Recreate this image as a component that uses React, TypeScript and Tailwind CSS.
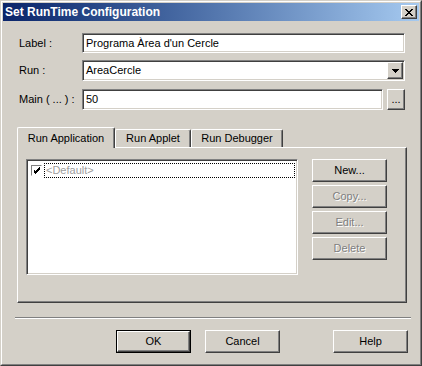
import React from "react";

const sunken =
  "border border-t-[#808080] border-l-[#808080] border-b-white border-r-white shadow-[inset_1px_1px_0_#404040,inset_-1px_-1px_0_#d4d0c8]";
const raised =
  "border border-t-white border-l-white border-b-[#404040] border-r-[#404040] shadow-[inset_-1px_-1px_0_#808080]";

function Button({
  label,
  disabled = false,
  isDefault = false,
  className = "",
}: {
  label: string;
  disabled?: boolean;
  isDefault?: boolean;
  className?: string;
}) {
  const inner = (
    <div
      className={`flex h-full w-full items-center justify-center bg-[#d4d0c8] ${raised} ${
        disabled ? "text-[#808080] [text-shadow:1px_1px_0_#fff]" : "text-black"
      }`}
    >
      {label}
    </div>
  );
  if (isDefault) {
    return <div className={`border border-black ${className}`}>{inner}</div>;
  }
  return <div className={className}>{inner}</div>;
}

function CheckMark() {
  return (
    <svg width="7" height="7" viewBox="0 0 7 7" shapeRendering="crispEdges">
      <path d="M0 2h1v3h1v1h1v-1h1v-1h1v-1h1v-1h1v-2h-1v1h-1v1h-1v1h-1v1h-1v-1h-1v-1z" fill="#000" />
      <path d="M0 3h1v3h1v1h1v-1h1v-1h1v-1h1v-1h1v-1h-1v1h-1v1h-1v1h-1v1h-1v-1h-1v-1z" fill="#000" />
    </svg>
  );
}

export default function App() {
  const tabs = [
    { id: "app", label: "Run Application", w: "w-[98px]" },
    { id: "applet", label: "Run Applet", w: "w-[76px]" },
    { id: "debug", label: "Run Debugger", w: "w-[92px]" },
  ];

  return (
    <div className="h-[366px] w-[422px] bg-[#d4d0c8] font-['Liberation_Sans',Arial,sans-serif] text-[11px] text-black">
      {/* window frame */}
      <div className="h-full w-full border border-t-[#d4d0c8] border-l-[#d4d0c8] border-b-[#404040] border-r-[#404040]">
        <div className="flex h-full w-full flex-col border border-t-white border-l-white border-b-[#808080] border-r-[#808080] p-px">
          {/* title bar */}
          <div className="flex h-[18px] items-center justify-between bg-gradient-to-r from-[#0a246a] to-[#a6caf0] pl-[2px] pr-[2px]">
            <span className="text-[12px] font-bold text-white">Set RunTime Configuration</span>
            <div className={`flex h-[14px] w-[16px] items-center justify-center bg-[#d4d0c8] ${raised}`}>
              <svg width="8" height="7" viewBox="0 0 8 7" shapeRendering="crispEdges">
                <path d="M0 0h2l2 2.5 2-2.5h2l-3 3.5 3 3.5h-2l-2-2.5-2 2.5h-2l3-3.5z" fill="#000" />
              </svg>
            </div>
          </div>

          {/* fields */}
          <div className="flex flex-col pl-[16px] pr-[14px] pt-[12px]">
            <div className="flex h-[20px] items-center">
              <span className="w-[63px]">Label :</span>
              <div className={`flex h-[20px] flex-1 items-center bg-white pl-[3px] ${sunken}`}>
                Programa Àrea d'un Cercle
              </div>
            </div>
            <div className="mt-[7px] flex h-[21px] items-center">
              <span className="w-[63px]">Run :</span>
              <div className={`flex h-[21px] flex-1 items-center bg-white pl-[3px] ${sunken}`}>
                <span className="flex-1">AreaCercle</span>
                <div className={`mr-[1px] flex h-[17px] w-[16px] items-center justify-center bg-[#d4d0c8] ${raised}`}>
                  <svg width="7" height="4" viewBox="0 0 7 4" shapeRendering="crispEdges">
                    <path d="M0 0h7l-3.5 4z" fill="#000" />
                  </svg>
                </div>
              </div>
            </div>
            <div className="mt-[8px] flex h-[21px] items-center">
              <span className="w-[63px]">Main ( ... ) :</span>
              <div className={`flex h-[21px] flex-1 items-center bg-white pl-[3px] ${sunken}`}>50</div>
              <Button label="..." className="ml-[4px] h-[21px] w-[18px]" />
            </div>
          </div>

          {/* tabs */}
          <div className="mt-[17px] flex flex-col pl-[14px] pr-[12px]">
            <div className="relative z-10 flex h-[20px] items-end">
              {tabs.map((t, i) =>
                i === 0 ? (
                  <div
                    key={t.id}
                    className={`flex h-[21px] ${t.w} -mb-px items-center justify-center rounded-t-[2px] border border-b-0 border-t-white border-l-white border-r-[#404040] bg-[#d4d0c8] shadow-[inset_-1px_0_0_#808080]`}
                  >
                    {t.label}
                  </div>
                ) : (
                  <div
                    key={t.id}
                    className={`flex h-[18px] ${t.w} items-center justify-center rounded-t-[2px] border border-b-0 border-t-white border-l-white border-r-[#404040] bg-[#d4d0c8] shadow-[inset_-1px_0_0_#808080]`}
                  >
                    {t.label}
                  </div>
                )
              )}
            </div>
            <div className={`flex h-[156px] gap-[14px] px-[8px] pt-[11px] ${raised}`}>
              <div className={`h-[116px] w-[272px] bg-white p-[2px] ${sunken}`}>
                <div className="flex h-[16px] items-center gap-[2px] pl-[2px]">
                  <div className="flex h-[11px] w-[11px] items-center justify-center border border-t-[#808080] border-l-[#808080] border-b-white border-r-white bg-white">
                    <CheckMark />
                  </div>
                  <div className="flex h-[15px] flex-1 items-center border border-dotted border-black pl-[1px] text-[#a0a0a0]">
                    &lt;Default&gt;
                  </div>
                </div>
              </div>
              <div className="flex flex-col gap-[3px]">
                <Button label="New..." className="h-[23px] w-[75px]" />
                <Button label="Copy..." disabled className="h-[23px] w-[75px]" />
                <Button label="Edit..." disabled className="h-[23px] w-[75px]" />
                <Button label="Delete" disabled className="h-[23px] w-[75px]" />
              </div>
            </div>
          </div>

          {/* separator */}
          <div className="ml-[12px] mr-[8px] mt-[14px] h-[2px] border-t border-t-[#808080] border-b border-b-white" />

          {/* bottom buttons */}
          <div className="mt-[11px] flex pl-[113px]">
            <Button label="OK" isDefault className="h-[23px] w-[75px]" />
            <Button label="Cancel" className="ml-[14px] h-[23px] w-[75px]" />
            <Button label="Help" className="ml-[53px] h-[23px] w-[75px]" />
          </div>
        </div>
      </div>
    </div>
  );
}
